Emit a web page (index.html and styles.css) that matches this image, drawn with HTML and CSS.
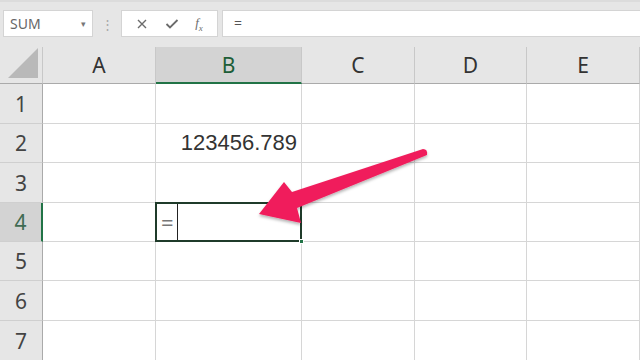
FILE: index.html
```html
<!DOCTYPE html>
<html lang="ja">
<head>
    <meta charset="UTF-8">
    <title>Excel</title>
    <link rel="stylesheet" href="styles.css">
</head>
<body>
    <div class="formula-bar">
        <div class="name-box">
            <span>SUM</span>
            <span class="drop">&#9662;</span>
        </div>
        <div class="grip">&#8942;</div>
        <div class="fn-buttons">
            <svg width="12" height="12" viewBox="0 0 12 12"><path d="M2 2 L10 10 M10 2 L2 10" stroke="#6b6b6b" stroke-width="1.4" fill="none"/></svg>
            <svg width="14" height="12" viewBox="0 0 14 12"><path d="M1.5 6 L5 9.5 L12.5 2" stroke="#6b6b6b" stroke-width="1.8" fill="none"/></svg>
            <span class="fx"><i>f</i><sub>x</sub></span>
        </div>
        <div class="formula-input">=</div>
    </div>

    <div class="sheet">
        <div class="corner"><div class="tri"></div></div>
        <div class="col-head">A</div>
        <div class="col-head active">B</div>
        <div class="col-head">C</div>
        <div class="col-head">D</div>
        <div class="col-head">E</div>

        <div class="row-head">1</div>
        <div class="cell"></div><div class="cell"></div><div class="cell"></div><div class="cell"></div><div class="cell"></div>

        <div class="row-head">2</div>
        <div class="cell"></div><div class="cell num">123456.789</div><div class="cell"></div><div class="cell"></div><div class="cell"></div>

        <div class="row-head">3</div>
        <div class="cell"></div><div class="cell"></div><div class="cell"></div><div class="cell"></div><div class="cell"></div>

        <div class="row-head active">4</div>
        <div class="cell"></div>
        <div class="cell selected">
            <span class="eq">=</span><span class="caret"></span>
            <span class="handle"></span>
        </div>
        <div class="cell"></div><div class="cell"></div><div class="cell"></div>

        <div class="row-head">5</div>
        <div class="cell"></div><div class="cell"></div><div class="cell"></div><div class="cell"></div><div class="cell"></div>

        <div class="row-head">6</div>
        <div class="cell"></div><div class="cell"></div><div class="cell"></div><div class="cell"></div><div class="cell"></div>

        <div class="row-head">7</div>
        <div class="cell"></div><div class="cell"></div><div class="cell"></div><div class="cell"></div><div class="cell"></div>

        <!-- callout arrow -->
        <svg class="arrow" width="640" height="360" viewBox="0 0 640 360">
            <defs>
                <filter id="shadow" x="-10%" y="-10%" width="120%" height="130%">
                    <feDropShadow dx="0" dy="2" stdDeviation="1.5" flood-color="#000" flood-opacity="0.3"/>
                </filter>
            </defs>
            <path d="M423 149 Q428 149 427 155 L297 208 L301 223 L259 214 L284 182 L292 192 Z"
                  fill="#f01e5c" filter="url(#shadow)"/>
        </svg>
    </div>
</body>
</html>
```

FILE: styles.css
```css
* {
    box-sizing: border-box;
}
body {
    margin: 0;
    width: 640px;
    height: 360px;
    overflow: hidden;
    background: #fff;
    font-family: "Noto Sans", "Noto Sans CJK JP", sans-serif;
    color: #333;
}
/* Formula bar */
.formula-bar {
    height: 47px;
    background: #e6e6e6;
    border-top: 2px solid #dcdcdc;
    display: flex;
    align-items: flex-start;
    padding-top: 8px;
}
.name-box {
    margin-left: 3px;
    width: 90px;
    height: 27px;
    background: #fff;
    border: 1px solid #d4d4d4;
    display: flex;
    align-items: center;
    justify-content: space-between;
    padding: 0 6px 0 6px;
    font-size: 14px;
    color: #666;
}
.name-box .drop {
    font-size: 9px;
    color: #777;
}
.grip {
    width: 28px;
    height: 27px;
    display: flex;
    align-items: center;
    justify-content: center;
    color: #a8a8a8;
    font-size: 13px;
}
.fn-buttons {
    width: 97px;
    height: 27px;
    background: #fff;
    border: 1px solid #d4d4d4;
    display: flex;
    align-items: center;
    justify-content: space-around;
    padding: 0 6px;
}
.fx {
    font-family: "Liberation Serif", serif;
    font-size: 13px;
    color: #6b6b6b;
}
.fx sub {
    font-size: 9px;
    font-style: italic;
}
.formula-input {
    flex: 1;
    margin-left: 4px;
    height: 27px;
    background: #fff;
    border: 1px solid #d4d4d4;
    border-right: none;
    padding-left: 11px;
    font-size: 14px;
    line-height: 24px;
    color: #555;
}
/* Sheet grid */
.sheet {
    position: relative;
    display: grid;
    grid-template-columns: 43px 113px 146px 113px 112px 113px;
    grid-template-rows: 37px 40px 39px 40px 39px 39px 40px 40px;
}
.corner {
    background: #e6e6e6;
    border-right: 1px solid #c8c8c8;
    border-bottom: 1px solid #aaa;
    display: flex;
    align-items: flex-end;
    justify-content: flex-end;
    padding: 0 4px 5px 0;
}
.tri {
    width: 0;
    height: 0;
    border-left: 30px solid transparent;
    border-bottom: 30px solid #b9b9b9;
}
.col-head {
    background: #e6e6e6;
    border-right: 1px solid #c8c8c8;
    border-bottom: 1px solid #aaa;
    display: flex;
    align-items: center;
    justify-content: center;
    font-size: 21px;
    color: #333;
}
.col-head.active {
    background: #d3d3d3;
    color: #1e5e38;
    border-bottom: 2px solid #217346;
}
.row-head {
    background: #e6e6e6;
    border-right: 1px solid #aaa;
    border-bottom: 1px solid #cfcfcf;
    display: flex;
    align-items: center;
    justify-content: center;
    font-size: 21px;
    color: #444;
}
.row-head.active {
    background: #d3d3d3;
    color: #3f6b52;
    border-right: 2px solid #217346;
}
.cell {
    border-right: 1px solid #d6d6d6;
    border-bottom: 1px solid #d6d6d6;
}
.num {
    display: flex;
    align-items: center;
    justify-content: flex-end;
    padding-right: 4px;
    font-family: "Liberation Sans", sans-serif;
    font-size: 22px;
    color: #333;
}
.selected {
    position: relative;
    border: 2px solid #1f3b2a;
    margin: -1px 0 0 -1px;
    display: flex;
    align-items: center;
}
.eq {
    font-size: 22px;
    color: #777;
    padding-left: 4px;
    width: 20px;
}
.caret {
    width: 1px;
    height: 100%;
    background: #222;
}
.handle {
    position: absolute;
    right: -4px;
    bottom: -4px;
    width: 5px;
    height: 5px;
    background: #217346;
    border: 1px solid #fff;
}
.arrow {
    position: absolute;
    left: 0;
    top: -47px;
    pointer-events: none;
}
```
